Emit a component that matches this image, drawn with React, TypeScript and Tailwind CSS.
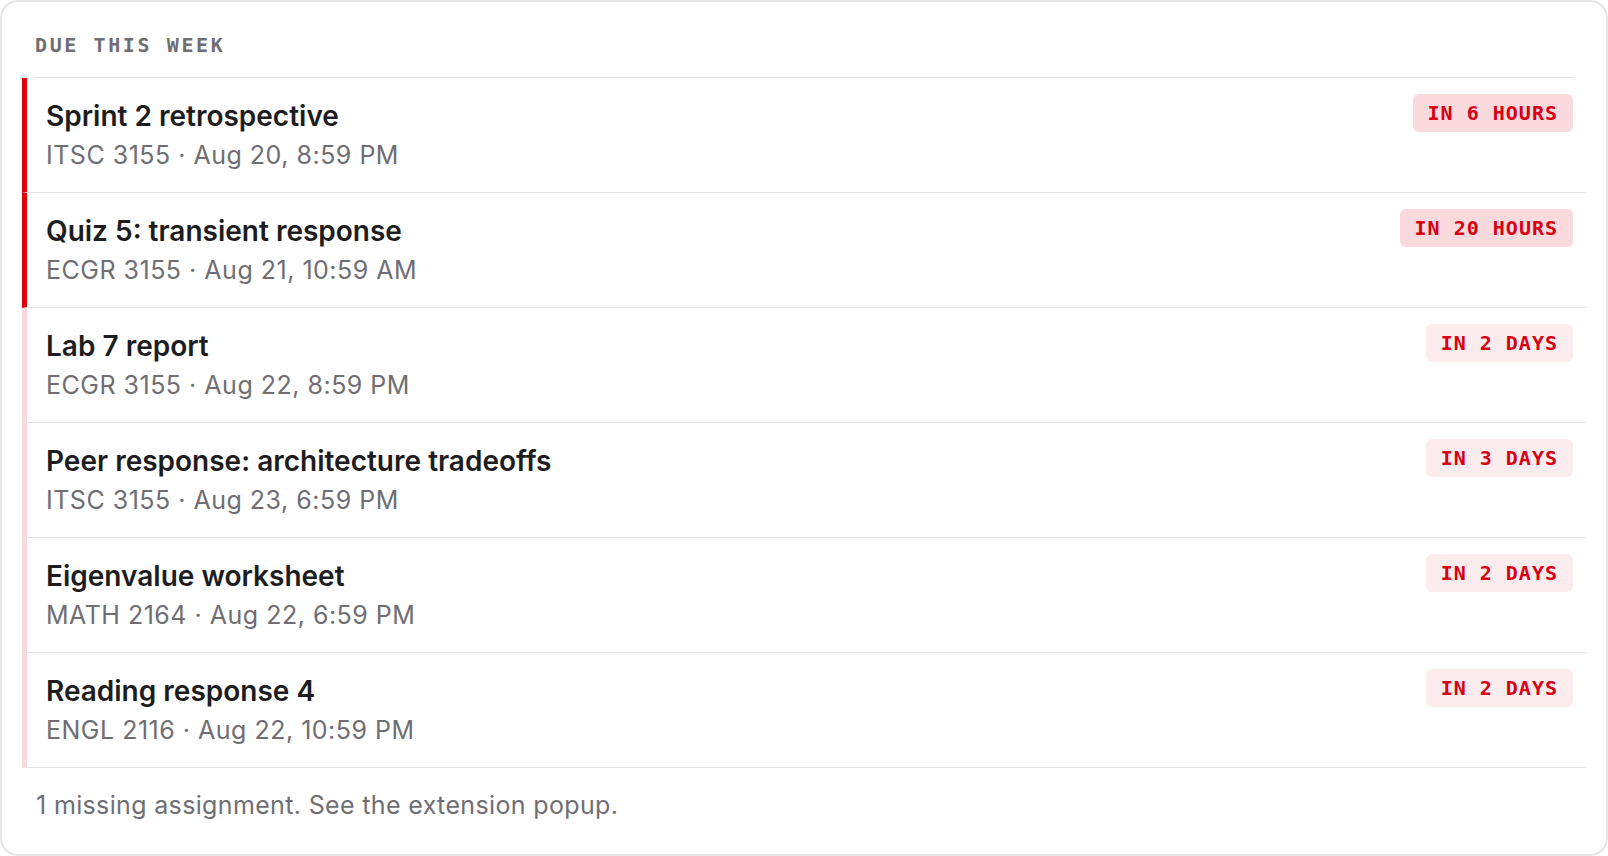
import React from "react";

type Item = {
  title: string;
  course: string;
  due: string;
  badge: string;
  urgent: boolean;
};

const items: Item[] = [
  { title: "Sprint 2 retrospective", course: "ITSC 3155", due: "Aug 20, 8:59 PM", badge: "IN 6 HOURS", urgent: true },
  { title: "Quiz 5: transient response", course: "ECGR 3155", due: "Aug 21, 10:59 AM", badge: "IN 20 HOURS", urgent: true },
  { title: "Lab 7 report", course: "ECGR 3155", due: "Aug 22, 8:59 PM", badge: "IN 2 DAYS", urgent: false },
  { title: "Peer response: architecture tradeoffs", course: "ITSC 3155", due: "Aug 23, 6:59 PM", badge: "IN 3 DAYS", urgent: false },
  { title: "Eigenvalue worksheet", course: "MATH 2164", due: "Aug 22, 6:59 PM", badge: "IN 2 DAYS", urgent: false },
  { title: "Reading response 4", course: "ENGL 2116", due: "Aug 22, 10:59 PM", badge: "IN 2 DAYS", urgent: false },
];

const sans = { fontFamily: "Inter, 'Noto Sans', sans-serif" };
const mono = { fontFamily: "'DejaVu Sans Mono', 'Liberation Mono', monospace" };

export default function App() {
  return (
    <div className="w-[1608px] h-[856px] bg-white" style={sans}>
      <div className="h-[856px] w-full rounded-[18px] border-2 border-[#e6e6e6] bg-white px-[20px]">
        <div
          className="mx-3 border-b border-[#e4e4e4] pt-[29px] pb-[18px] pl-[1px] text-[20px] leading-[28px] font-bold text-[#6e6e73] tracking-[2.6px]"
          style={mono}
        >
          DUE THIS WEEK
        </div>
        <div>
          {items.map((it, i) => (
            <div
              key={i}
              className={
                "flex items-start justify-between border-b border-[#e4e4e4] border-l-[5px] pl-[19px] pr-[13px] pt-[16px] pb-[21px] " +
                (it.urgent ? "border-l-[#e1000f]" : "border-l-[#f9d9db]")
              }
            >
              <div className="pt-[5px]">
                <div className="text-[28px] leading-[35px] font-semibold text-[#1d1d1f]">{it.title}</div>
                <div className="mt-[5px] text-[25px] leading-[32px] tracking-[0.5px] text-[#6e6e73]">
                  {it.course} · {it.due}
                </div>
              </div>
              <div
                className={
                  "rounded-[6px] px-[15px] py-[7px] text-[20px] leading-[24px] font-bold tracking-[1px] text-[#d70015] " +
                  (it.urgent ? "bg-[#fbdadd]" : "bg-[#fdeced]")
                }
                style={mono}
              >
                {it.badge}
              </div>
            </div>
          ))}
        </div>
        <div className="pl-[14px] pr-3 pt-[21px] text-[25px] leading-[32px] tracking-[0.35px] text-[#6e6e73]">
          1 missing assignment. See the extension popup.
        </div>
      </div>
    </div>
  );
}
